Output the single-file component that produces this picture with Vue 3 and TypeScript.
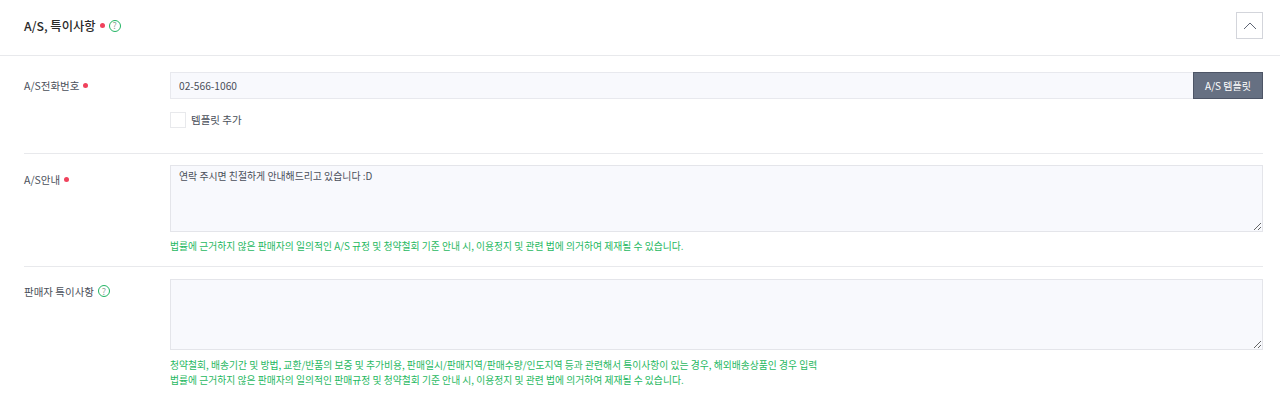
<script setup lang="ts">
import {ref} from "vue";

const phone = ref('02-566-1060')
const guide = ref('연락 주시면 친절하게 안내해드리고 있습니다 :D')
const seller = ref('')
const checked = ref(false)

const lawNotice = '법률에 근거하지 않은 판매자의 일의적인 A/S 규정 및 청약철회 기준 안내 시, 이용정지 및 관련 법에 의거하여 제재될 수 있습니다.'
const sellerNotice = [
  '청약철회, 배송기간 및 방법, 교환/반품의 보증 및 추가비용, 판매일시/판매지역/판매수량/인도지역 등과 관련해서 특이사항이 있는 경우, 해외배송상품인 경우 입력',
  '법률에 근거하지 않은 판매자의 일의적인 판매규정 및 청약철회 기준 안내 시, 이용정지 및 관련 법에 의거하여 제재될 수 있습니다.',
]
</script>

<template>
  <div class="panel">
    <div class="head">
      <div class="title">
        <span>A/S, 특이사항</span>
        <i class="dot"></i>
        <span class="help">?</span>
      </div>
      <button class="fold" type="button" aria-label="접기">
        <svg width="14" height="8" viewBox="0 0 14 8" fill="none">
          <path d="M1 7L7 1L13 7" stroke="#5f6675" stroke-width="1"/>
        </svg>
      </button>
    </div>

    <div class="body">
      <div class="row first">
        <div class="label">A/S전화번호<i class="dot"></i></div>
        <div class="field">
          <div class="input-line">
            <input v-model="phone" class="input" type="text"/>
            <button class="template" type="button">A/S 템플릿</button>
          </div>
          <label class="check">
            <input v-model="checked" type="checkbox"/>
            <span class="box"></span>
            <span>템플릿 추가</span>
          </label>
        </div>
      </div>

      <div class="row second">
        <div class="label">A/S안내<i class="dot"></i></div>
        <div class="field">
          <textarea v-model="guide" class="area guide"></textarea>
          <p class="notice">{{ lawNotice }}</p>
        </div>
      </div>

      <div class="row third">
        <div class="label">판매자 특이사항<span class="help small">?</span></div>
        <div class="field">
          <textarea v-model="seller" class="area seller"></textarea>
          <div class="notices">
            <p v-for="line in sellerNotice" :key="line" class="notice">{{ line }}</p>
          </div>
        </div>
      </div>
    </div>
  </div>
</template>

<style>
html, body {
  background: #fff;
}
</style>

<style scoped>
.panel {
  width: 1280px;
  height: 401px;
  overflow: hidden;
  font-family: "Noto Sans CJK KR", "Noto Sans", sans-serif;
  font-size: 10.2px;
  color: #4a4f5a;
  background: #fff;
}

.head {
  display: flex;
  justify-content: space-between;
  align-items: center;
  box-sizing: border-box;
  height: 56px;
  padding: 0 17px 4px 24px;
  border-bottom: 1px solid #e8e9ec;
}

.title {
  display: flex;
  align-items: center;
  font-size: 12.3px;
  font-weight: 500;
  color: #2a2a2a;
}

.dot {
  display: inline-block;
  width: 5px;
  height: 5px;
  margin-left: 4px;
  border-radius: 50%;
  background: #f0425c;
}

.help {
  display: inline-flex;
  justify-content: center;
  align-items: center;
  box-sizing: border-box;
  width: 12px;
  height: 12px;
  margin-left: 4px;
  border: 1px solid #22b463;
  border-radius: 50%;
  font-size: 9px;
  font-weight: 400;
  line-height: 1;
  color: #8fa59a;
}

.fold {
  display: flex;
  justify-content: center;
  align-items: center;
  width: 27px;
  height: 27px;
  padding: 0;
  border: 1px solid #d3d5db;
  background: #fff;
}

.body {
  padding: 0 17px 0 24px;
}

.row {
  display: grid;
  grid-template-columns: 146px 1fr;
}

.row + .row {
  border-top: 1px solid #e8e9ec;
}

.first {
  height: 81px;
  padding-top: 16px;
}

.second {
  height: 101px;
  padding-top: 11px;
}

.third {
  padding-top: 12px;
}

.label {
  display: flex;
  align-items: center;
  align-self: start;
  height: 26px;
  color: #4a4f5a;
  font-size: 10.5px;
}

.second .label {
  height: 28px;
}

.third .label {
  height: 24px;
}

.input-line {
  display: flex;
  height: 27px;
}

.input {
  flex: 1;
  min-width: 0;
  box-sizing: border-box;
  height: 27px;
  padding: 0 8px;
  border: 1px solid #e8e9ee;
  border-right: 0;
  outline: none;
  background: #f8f9fd;
  font: inherit;
  color: #4a4f5a;
}

.template {
  width: 70px;
  height: 27px;
  padding: 0;
  border: 1px solid #4d5566;
  background: #667082;
  font: inherit;
  font-size: 10px;
  color: #fff;
}

.check {
  display: flex;
  align-items: center;
  gap: 5px;
  margin-top: 12px;
  height: 17px;
  font-size: 10.5px;
}

.check input {
  display: none;
}

.box {
  box-sizing: border-box;
  width: 16px;
  height: 16px;
  border: 1px solid #e8e9ec;
  background: #fff;
}

.area {
  display: block;
  box-sizing: border-box;
  width: 100%;
  padding: 3px 8px;
  border: 1px solid #e4e5ea;
  outline: none;
  background: #f8f9fd;
  font: inherit;
  font-size: 9.9px;
  line-height: 15px;
  color: #4a4f5a;
}

.guide {
  height: 67px;
}

.seller {
  height: 71px;
}

.notice {
  margin: 0;
  font-size: 9.8px;
  line-height: 15px;
  white-space: nowrap;
  color: #1fb85f;
}

.second .notice {
  margin-top: 7px;
}

.notices {
  margin-top: 8px;
}
</style>
